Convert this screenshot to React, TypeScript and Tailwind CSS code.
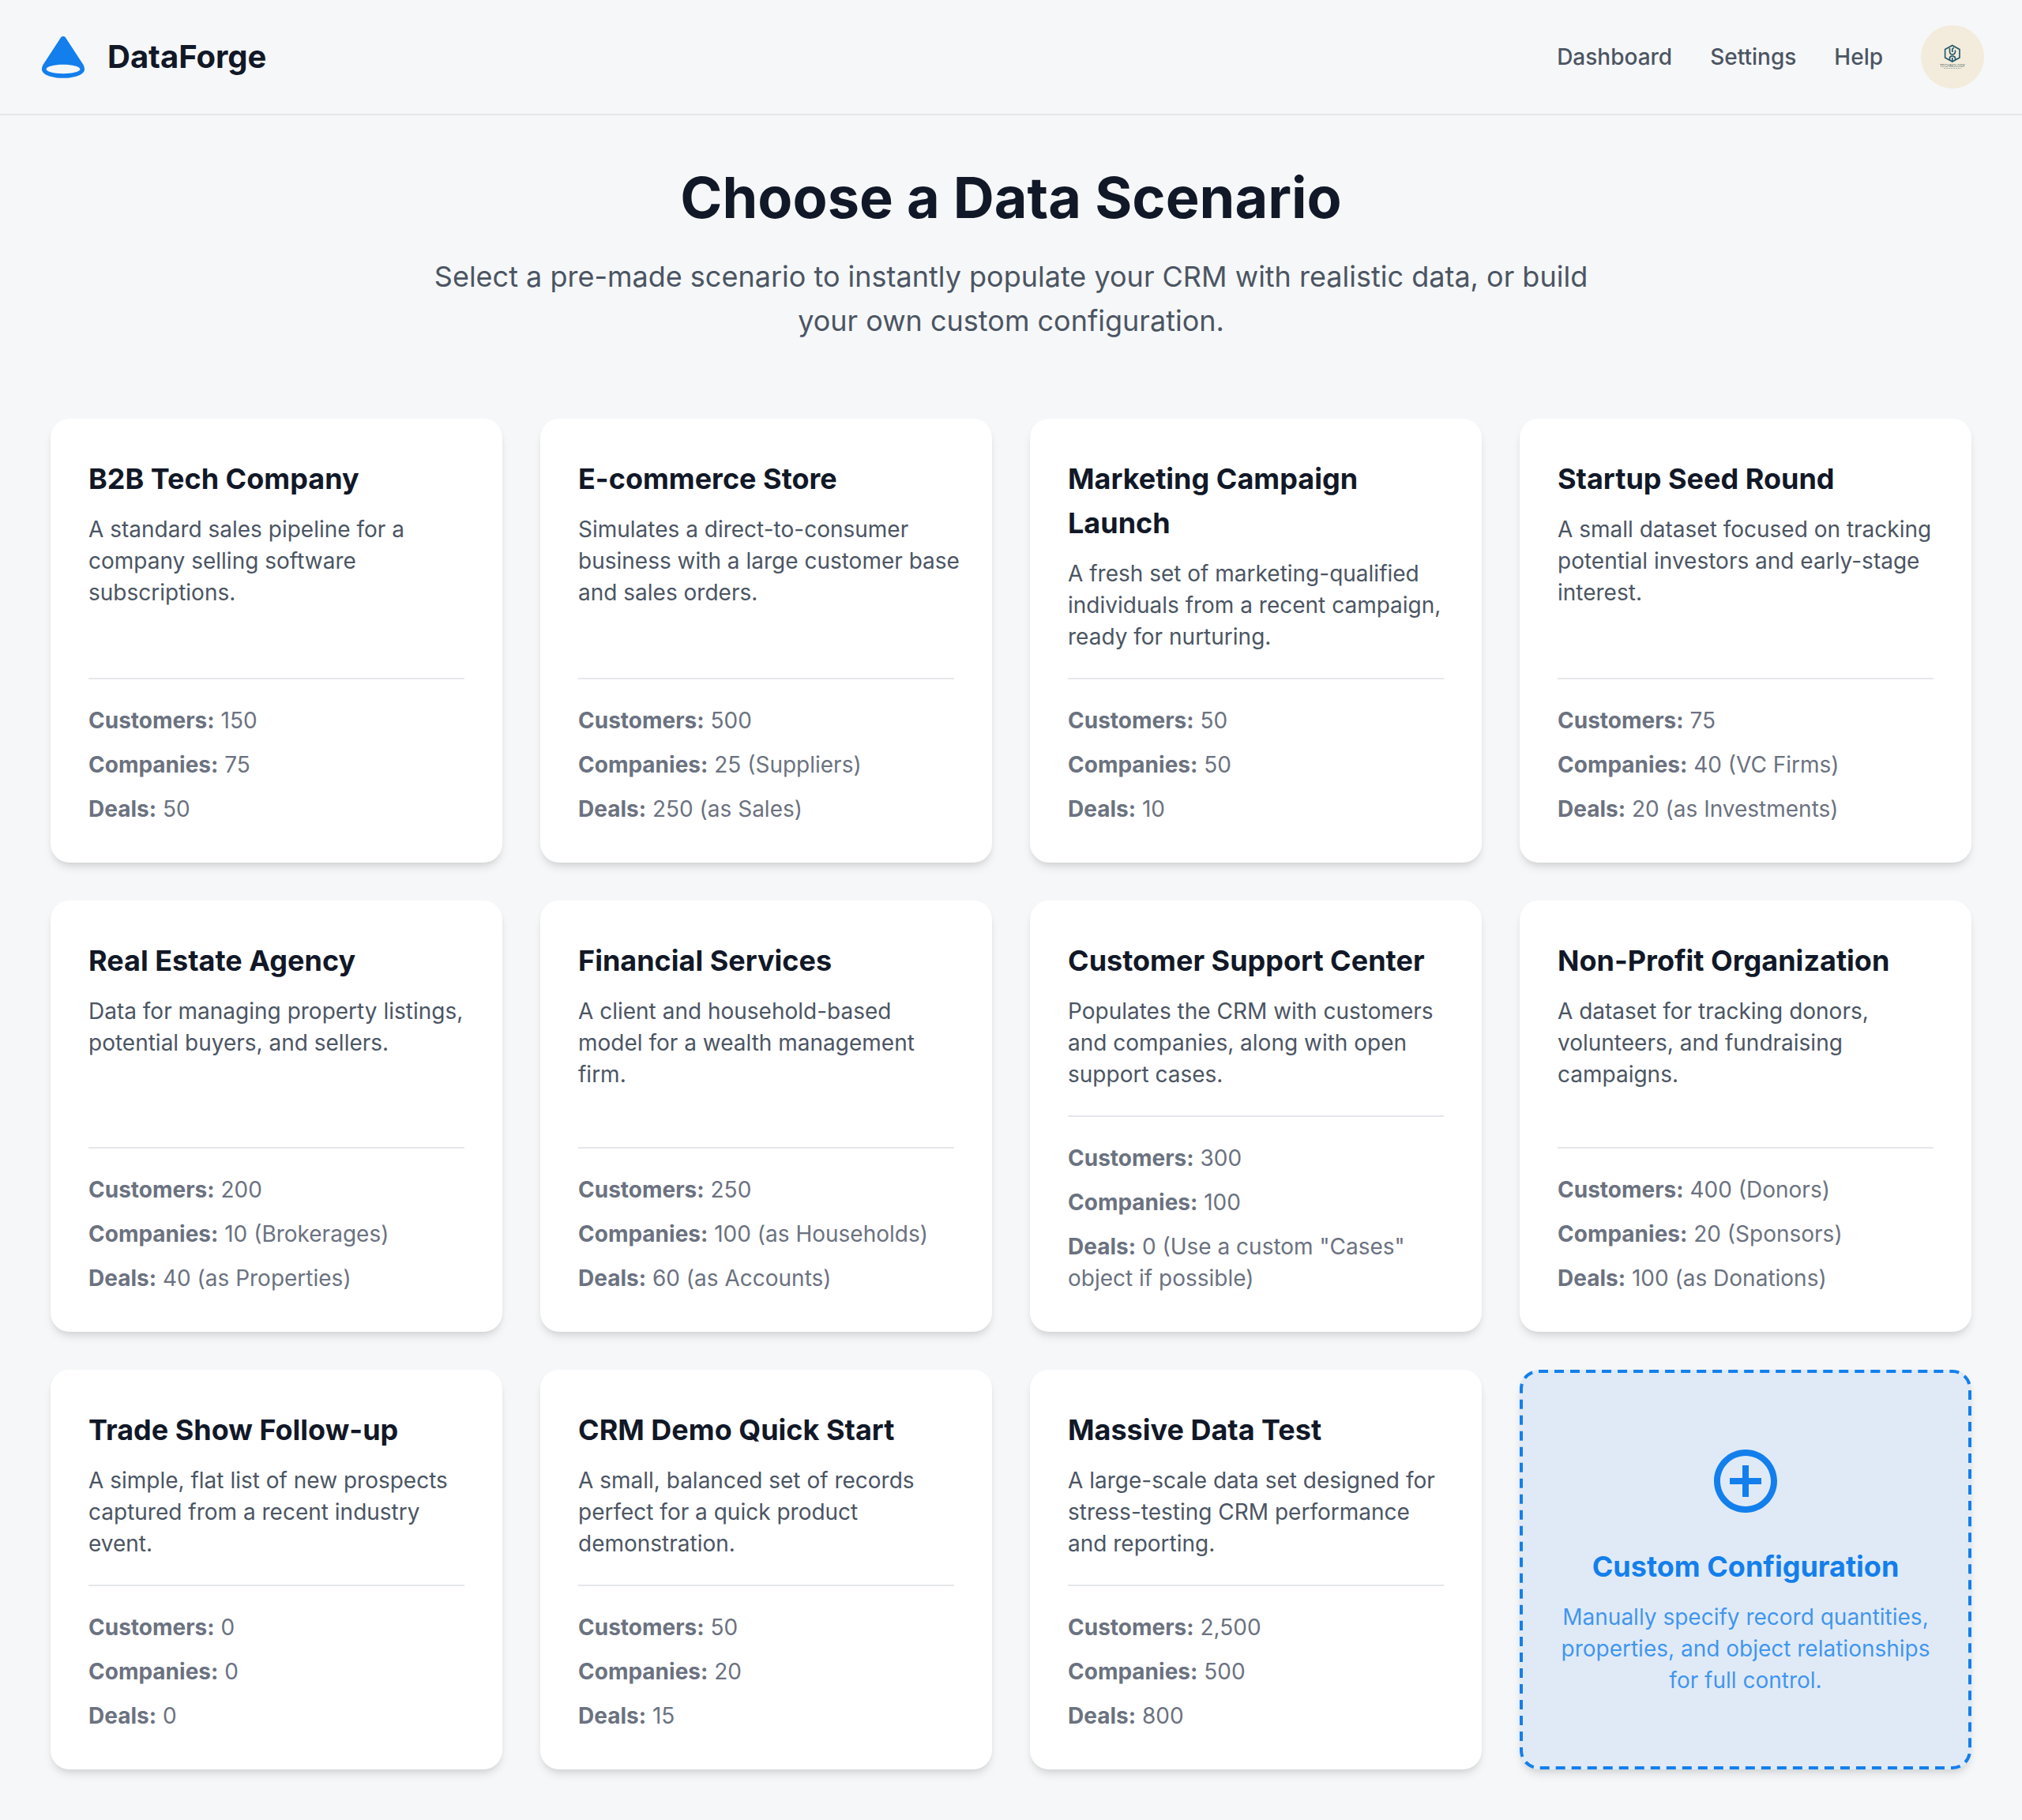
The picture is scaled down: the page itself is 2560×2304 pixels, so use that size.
import React from "react";

type Scenario = {
  title: string;
  description: string;
  customers: string;
  companies: string;
  deals: string;
};

const scenarios: Scenario[] = [
  { title: "B2B Tech Company", description: "A standard sales pipeline for a company selling software subscriptions.", customers: "150", companies: "75", deals: "50" },
  { title: "E-commerce Store", description: "Simulates a direct-to-consumer business with a large customer base and sales orders.", customers: "500", companies: "25 (Suppliers)", deals: "250 (as Sales)" },
  { title: "Marketing Campaign Launch", description: "A fresh set of marketing-qualified individuals from a recent campaign, ready for nurturing.", customers: "50", companies: "50", deals: "10" },
  { title: "Startup Seed Round", description: "A small dataset focused on tracking potential investors and early-stage interest.", customers: "75", companies: "40 (VC Firms)", deals: "20 (as Investments)" },
  { title: "Real Estate Agency", description: "Data for managing property listings, potential buyers, and sellers.", customers: "200", companies: "10 (Brokerages)", deals: "40 (as Properties)" },
  { title: "Financial Services", description: "A client and household-based model for a wealth management firm.", customers: "250", companies: "100 (as Households)", deals: "60 (as Accounts)" },
  { title: "Customer Support Center", description: "Populates the CRM with customers and companies, along with open support cases.", customers: "300", companies: "100", deals: "0 (Use a custom \"Cases\" object if possible)" },
  { title: "Non-Profit Organization", description: "A dataset for tracking donors, volunteers, and fundraising campaigns.", customers: "400 (Donors)", companies: "20 (Sponsors)", deals: "100 (as Donations)" },
  { title: "Trade Show Follow-up", description: "A simple, flat list of new prospects captured from a recent industry event.", customers: "0", companies: "0", deals: "0" },
  { title: "CRM Demo Quick Start", description: "A small, balanced set of records perfect for a quick product demonstration.", customers: "50", companies: "20", deals: "15" },
  { title: "Massive Data Test", description: "A large-scale data set designed for stress-testing CRM performance and reporting.", customers: "2,500", companies: "500", deals: "800" },
];

const navLinks = ["Dashboard", "Settings", "Help"];

function Logo() {
  return (
    <svg className="size-16 text-[#137fec]" viewBox="0 0 64 64" fill="none" aria-hidden="true">
      <path
        fill="currentColor"
        fillRule="evenodd"
        d="M28.7 8C30.2 5.4 33.8 5.4 35.3 8L57 41.3C58.3 43.4 59 45.600 59 47.700C59 54.400 47 58.800 32 58.800C17 58.800 5 54.400 5 47.700C5 45.600 5.700 43.400 7 41.300ZM32 41.800C20.200 41.800 10.600 44.400 10.600 47.500C10.600 50.600 20.200 53.200 32 53.200C43.800 53.200 53.400 50.600 53.400 47.500C53.400 44.400 43.800 41.800 32 41.800Z"
      />
    </svg>
  );
}

function Avatar() {
  return (
    <button type="button" aria-label="Account" className="size-20 shrink-0 overflow-hidden rounded-full bg-[#f3ebdb]">
      <svg viewBox="0 0 80 80" className="size-full" fill="none" aria-hidden="true">
        <g stroke="#1f5668" strokeWidth="1.6">
          <path d="M39.800 25.500L49 30.500V41L39.800 46L30.600 41V30.500Z" />
          <path d="M36.500 29V33Q36.500 37 39.800 37T43.500 33.500V31.500M39.800 34V31Q39.800 29 42 28.500M36.500 44V41.500Q36.500 39 39.800 39T43.500 41.500V44M39.800 41V46" />
        </g>
        <text x="40" y="52.500" textAnchor="middle" fontSize="4.600" fill="#4f686c" fontFamily="Inter, sans-serif">TECHNOLOGY</text>
        <path d="M29 54.500H51" stroke="#9fb8b4" strokeDasharray="2 1" />
      </svg>
    </button>
  );
}

function Stat({ label, value }: { label: string; value: string }) {
  return (
    <li>
      <strong className="font-bold">{label}:</strong> {value}
    </li>
  );
}

function ScenarioCard({ scenario }: { scenario: Scenario }) {
  return (
    <article className="flex flex-col justify-between gap-8 rounded-3xl bg-white p-12 shadow-[0_8px_12px_-2px_rgba(0,0,0,0.1),0_4px_8px_-4px_rgba(0,0,0,0.1)]">
      <div className="flex flex-col gap-4">
        <h2 className="text-4xl leading-14 font-bold text-[#111827]">{scenario.title}</h2>
        <p className="-mr-2 text-[28px] leading-10 text-[#4b5563]">{scenario.description}</p>
      </div>
      <ul className="flex flex-col gap-4 border-t-2 border-[#e5e7eb] pt-8 text-[28px] leading-10 text-[#6b7280]">
        <Stat label="Customers" value={scenario.customers} />
        <Stat label="Companies" value={scenario.companies} />
        <Stat label="Deals" value={scenario.deals} />
      </ul>
    </article>
  );
}

function CustomCard() {
  return (
    <button
      type="button"
      className="relative flex cursor-pointer flex-col items-center justify-center rounded-3xl bg-[#e0eaf6] p-12 text-center shadow-[0_8px_12px_-2px_rgba(0,0,0,0.1),0_4px_8px_-4px_rgba(0,0,0,0.1)]"
    >
      {/* Dashed outline with long, evenly spaced dashes */}
      <svg className="pointer-events-none absolute inset-0 size-full" fill="none" aria-hidden="true">
        <rect
          x="2"
          y="2"
          rx="22"
          className="h-[calc(100%-4px)] w-[calc(100%-4px)]"
          stroke="#137fec"
          strokeWidth="4"
          pathLength="2100"
          strokeDasharray="12 8"
        />
      </svg>
      <svg viewBox="0 0 24 24" className="size-24 text-[#137fec]" fill="currentColor" aria-hidden="true">
        <path d="M13 7h-2v4H7v2h4v4h2v-4h4v-2h-4V7zm-1-5C6.480 2 2 6.480 2 12s4.480 10 10 10 10-4.480 10-10S17.520 2 12 2zm0 18c-4.410 0-8-3.590-8-8s3.590-8 8-8 8 3.590 8 8-3.590 8-8 8z" />
      </svg>
      <span className="mt-8 text-4xl leading-14 font-bold text-[#137fec]">Custom Configuration</span>
      <span className="mt-4 text-[28px] leading-10 text-[#137fec]/80">
        Manually specify record quantities, properties, and object relationships for full control.
      </span>
    </button>
  );
}

export default function App() {
  return (
    <div className="min-h-screen bg-[#f6f7f8] font-['Inter',sans-serif]">
      <header className="flex items-center justify-between border-b-2 border-[#e5e7eb] px-12 py-8">
        <div className="flex items-center gap-6">
          <Logo />
          <span className="text-[40px] leading-14 font-bold text-[#111827]">DataForge</span>
        </div>
        <div className="flex items-center gap-12">
          <nav className="flex items-center gap-12">
            {navLinks.map((label) => (
              <a key={label} href="#" className="text-[28px] leading-10 font-medium text-[#4b5563]">
                {label}
              </a>
            ))}
          </nav>
          <Avatar />
        </div>
      </header>
      <main className="p-16">
        <div className="mx-auto flex max-w-[1536px] flex-col gap-8 text-center">
          <h1 className="text-7xl leading-20 font-bold text-[#111827]">Choose a Data Scenario</h1>
          <p className="text-4xl leading-14 text-[#4b5563]">
            Select a pre-made scenario to instantly populate your CRM with realistic data, or build your own custom configuration.
          </p>
        </div>
        <div className="mt-24 grid grid-cols-4 gap-12">
          {scenarios.map((scenario) => (
            <ScenarioCard key={scenario.title} scenario={scenario} />
          ))}
          <CustomCard />
        </div>
      </main>
    </div>
  );
}
